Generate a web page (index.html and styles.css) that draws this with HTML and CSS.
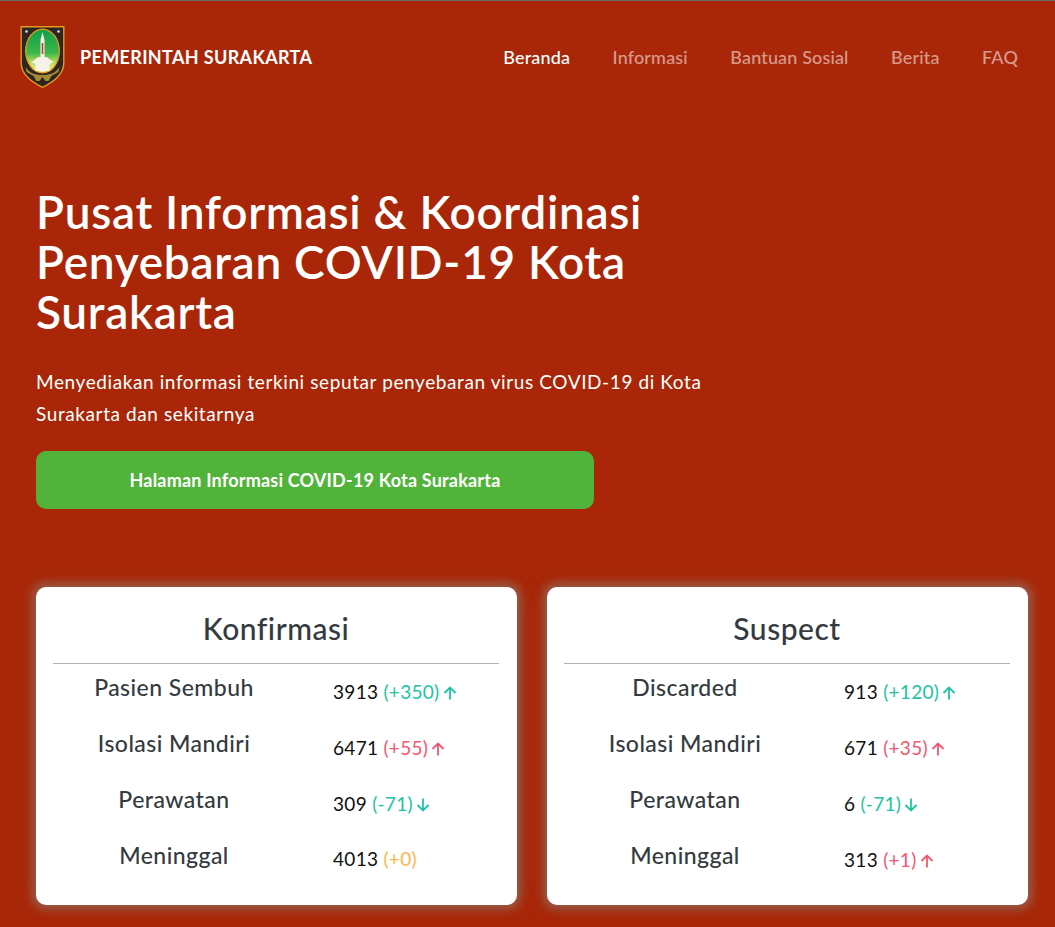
FILE: index.html
```html
<!DOCTYPE html>
<html lang="en">
<head>
  <meta charset="UTF-8" />
  <meta name="viewport" content="width=device-width, initial-scale=1.0"/>
  <title>Pemerintah Surakarta</title>
  <link rel="stylesheet" href="styles.css">
</head>
<body>

  <!-- NAVBAR -->
  <header class="nav-bar">
    <a class="brand" href="#">
      <svg class="brand-logo" viewBox="0 0 44 62" aria-hidden="true">
        <defs>
          <linearGradient id="logo-green" x1="0" y1="0" x2="0" y2="1">
            <stop offset="0" stop-color="#12a04a"/>
            <stop offset="0.55" stop-color="#3db54a"/>
            <stop offset="0.75" stop-color="#b5dc5a"/>
            <stop offset="1" stop-color="#e8f0a0"/>
          </linearGradient>
        </defs>
        <path d="M0.7 0.7H43.3V37C43.3 48 33 56 22 61.3C11 56 0.7 48 0.7 37Z" fill="#2b2622" stroke="#e8981a" stroke-width="1.4"/>
        <ellipse cx="22" cy="25" rx="17.5" ry="22.5" fill="#e8981a"/>
        <ellipse cx="22" cy="25" rx="16.2" ry="21.2" fill="url(#logo-green)"/>
        <path d="M20 14L22 6L24 14V31H20Z" fill="#f6f2ea"/>
        <path d="M21.2 17H22.8V28H21.2Z" fill="#c9372c"/>
        <path d="M18 31H26L33 36L29 38V45H15V38L11 36Z" fill="#f6f2ea"/>
        <circle cx="6" cy="5.5" r="1.3" fill="#e8e4da"/>
        <circle cx="38" cy="5.5" r="1.3" fill="#e8e4da"/>
        <path d="M5 41C9 47 14 49 22 49C30 49 35 47 39 41L38 46L31 50L28 55H25L22 51L19 55H16L13 50L6 46Z" fill="#a68a34"/>
      </svg>
      <span class="brand-name">PEMERINTAH SURAKARTA</span>
    </a>
    <nav class="nav-links">
      <a class="active" href="#">Beranda</a>
      <a href="#">Informasi</a>
      <a href="#">Bantuan Sosial</a>
      <a href="#">Berita</a>
      <a href="#">FAQ</a>
    </nav>
  </header>

  <!-- HERO -->
  <section class="hero">
    <h1>Pusat Informasi &amp; Koordinasi Penyebaran COVID-19 Kota Surakarta</h1>
    <p>Menyediakan informasi terkini seputar penyebaran virus COVID-19 di Kota Surakarta dan sekitarnya</p>
    <a class="hero-btn" href="#">Halaman Informasi COVID-19 Kota Surakarta</a>
  </section>

  <!-- STATS -->
  <section class="cards">
    <div class="card">
      <h2>Konfirmasi</h2>
      <div class="stat-row">
        <h3>Pasien Sembuh</h3>
        <div class="stat-value">3913 <span class="good">(+350)</span>
          <svg class="arrow good" viewBox="0 0 14 14"><path d="M7 13.5V2M1.5 7L7 1.5L12.5 7"/></svg>
        </div>
      </div>
      <div class="stat-row">
        <h3>Isolasi Mandiri</h3>
        <div class="stat-value">6471 <span class="bad">(+55)</span>
          <svg class="arrow bad" viewBox="0 0 14 14"><path d="M7 13.5V2M1.5 7L7 1.5L12.5 7"/></svg>
        </div>
      </div>
      <div class="stat-row">
        <h3>Perawatan</h3>
        <div class="stat-value">309 <span class="good">(-71)</span>
          <svg class="arrow good" viewBox="0 0 14 14"><path d="M7 .5V12M1.5 7L7 12.5L12.5 7"/></svg>
        </div>
      </div>
      <div class="stat-row">
        <h3>Meninggal</h3>
        <div class="stat-value no-arrow">4013 <span class="flat">(+0)</span></div>
      </div>
    </div>

    <div class="card">
      <h2>Suspect</h2>
      <div class="stat-row">
        <h3>Discarded</h3>
        <div class="stat-value">913 <span class="good">(+120)</span>
          <svg class="arrow good" viewBox="0 0 14 14"><path d="M7 13.5V2M1.5 7L7 1.5L12.5 7"/></svg>
        </div>
      </div>
      <div class="stat-row">
        <h3>Isolasi Mandiri</h3>
        <div class="stat-value">671 <span class="bad">(+35)</span>
          <svg class="arrow bad" viewBox="0 0 14 14"><path d="M7 13.5V2M1.5 7L7 1.5L12.5 7"/></svg>
        </div>
      </div>
      <div class="stat-row">
        <h3>Perawatan</h3>
        <div class="stat-value">6 <span class="good">(-71)</span>
          <svg class="arrow good" viewBox="0 0 14 14"><path d="M7 .5V12M1.5 7L7 12.5L12.5 7"/></svg>
        </div>
      </div>
      <div class="stat-row">
        <h3>Meninggal</h3>
        <div class="stat-value">313 <span class="bad">(+1)</span>
          <svg class="arrow bad" viewBox="0 0 14 14"><path d="M7 13.5V2M1.5 7L7 1.5L12.5 7"/></svg>
        </div>
      </div>
    </div>
  </section>

</body>
</html>
```

FILE: styles.css
```css
* {
  box-sizing: border-box;
}

html, body {
  height: 100%;
}

body {
  margin: 0;
  font-family: Lato, 'Open Sans', sans-serif;
  background: #a92708;
  border-top: 1px solid #666;
  overflow: hidden;
}

a {
  text-decoration: none;
}

.nav-bar {
  display: flex;
  justify-content: space-between;
  align-items: center;
  padding: 25px 37px 0 20px;
}

.brand {
  display: flex;
  align-items: center;
  gap: 15px;
}

.brand-logo {
  width: 45px;
  height: 62px;
}

.brand-name {
  color: #fff;
  font-size: 18px;
  font-weight: 700;
  letter-spacing: 0.35px;
}

.nav-links {
  display: flex;
  gap: 42.5px;
}

.nav-links a {
  color: rgba(255, 255, 255, 0.55);
  font-size: 18px;
  font-weight: 500;
  letter-spacing: 0.15px;
}

.nav-links a.active {
  color: #fff;
}

.hero {
  padding: 0 36px;
  margin-top: 99px;
}

.hero h1 {
  margin: 0;
  max-width: 660px;
  color: #fff;
  font-size: 46px;
  font-weight: 600;
  letter-spacing: 0.7px;
  line-height: 50px;
}

.hero p {
  margin: 29px 0 0;
  max-width: 680px;
  color: #fff;
  font-size: 19px;
  letter-spacing: 0.6px;
  line-height: 32px;
}

.hero-btn {
  display: block;
  width: 558px;
  margin-top: 21px;
  padding: 18px 0;
  background: #51b33a;
  border-radius: 10px;
  color: #fff;
  font-size: 18px;
  font-weight: 700;
  letter-spacing: 0.2px;
  line-height: 22px;
  text-align: center;
}

.cards {
  display: grid;
  grid-template-columns: 481px 481px;
  gap: 30px;
  padding: 0 36px;
  margin-top: 78px;
}

.card {
  height: 318px;
  padding: 20px 18px 0 17px;
  background: #fff;
  border-radius: 10px;
  box-shadow: 0 0 10px 4px rgba(140, 130, 120, 0.6), 0 0 32px 6px rgba(140, 130, 120, 0.06);
}

.card h2 {
  margin: 0;
  padding-bottom: 14px;
  border-bottom: 1px solid #b3b3b3;
  color: #343a40;
  font-size: 30px;
  font-weight: 500;
  letter-spacing: 0.5px;
  line-height: 42px;
  text-align: center;
}

.stat-row {
  display: grid;
  grid-template-columns: 242px 1fr;
  align-items: center;
  height: 56px;
}

.stat-row h3 {
  margin: 0 0 10px;
  color: #343a40;
  font-size: 23px;
  font-weight: 500;
  letter-spacing: 0.45px;
  text-align: center;
}

.stat-value {
  margin-bottom: 2px;
  padding-left: 38px;
  color: #111;
  font-size: 19px;
  letter-spacing: 0.3px;
}

.stat-value.no-arrow {
  margin-bottom: 4px;
}

.good {
  color: #1cc4a4;
}

.bad {
  color: #f5566f;
}

.flat {
  color: #ffb547;
}

.arrow {
  width: 14px;
  height: 14px;
  margin-left: -2px;
  fill: none;
  stroke: currentColor;
  stroke-width: 1.8;
  vertical-align: -1px;
}
```
